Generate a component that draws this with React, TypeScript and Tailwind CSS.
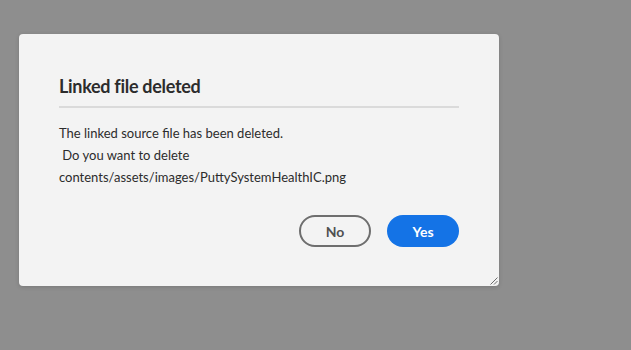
const ResizeGrip = () => (
  <svg className="absolute bottom-[1px] right-[1px]" width="9" height="9" viewBox="0 0 9 9">
    <path d="M8.5 1.5 L1.5 8.5 M8.5 5 L5 8.5" stroke="#6e6e6e" strokeWidth="1" />
  </svg>
);

const App = () => {
  return (
    <div className="min-h-screen bg-[#8e8e8e] pt-[34px] pl-[19px] font-['Lato','Liberation_Sans',sans-serif]">
      <div className="relative w-[480px] h-[252px] bg-[#f3f3f3] rounded-[4px] px-10 pt-10 shadow-[0_1px_4px_rgba(0,0,0,0.15)]">
        <h2 className="text-[18px] leading-6 font-bold text-[#2c2c2c] tracking-[-0.3px]">Linked file deleted</h2>
        <div className="mt-2 h-[2px] bg-[#dadada]" />
        <p className="mt-[14px] text-[13px] leading-[22px] text-[#2c2c2c] whitespace-pre-line">
          {"The linked source file has been deleted.\n\u00a0Do you want to delete\ncontents/assets/images/PuttySystemHealthIC.png"}
        </p>
        <div className="mt-[27px] flex justify-end gap-4">
          <button className="w-[72px] h-8 rounded-full border-2 border-[#6e6e6e] text-[14px] font-bold text-[#505050]">
            No
          </button>
          <button className="w-[72px] h-8 rounded-full bg-[#1473e6] text-[14px] font-bold text-white">
            Yes
          </button>
        </div>
        <ResizeGrip />
      </div>
    </div>
  );
};

export default App;
